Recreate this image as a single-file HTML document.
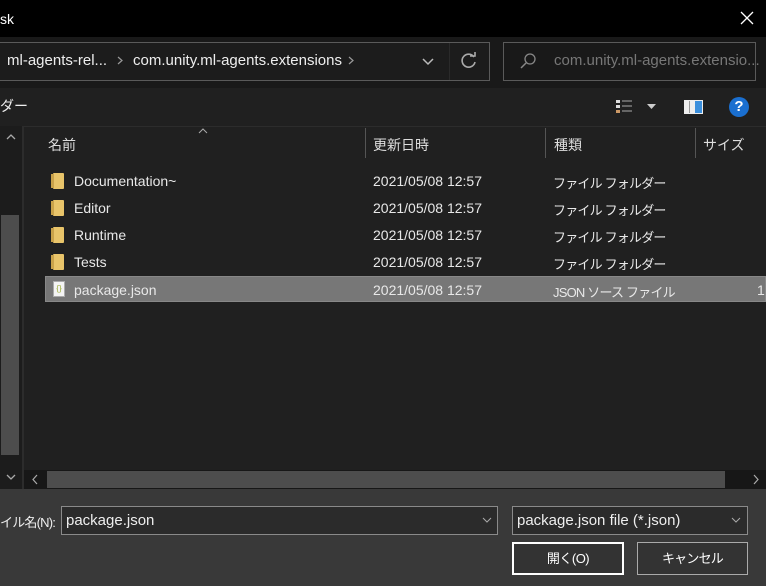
<!DOCTYPE html>
<html><head><meta charset="utf-8"><style>
*{margin:0;padding:0;box-sizing:border-box}
body{width:766px;height:586px;overflow:hidden;background:#202020;font-family:"Liberation Sans","Noto Sans CJK JP",sans-serif;color:#fff;position:relative;font-size:14px}
.a{position:absolute}
.row{position:absolute;left:45px;right:0;height:26px}
.row span{position:absolute;top:5px;font-size:14px;color:#e8e8e8;white-space:nowrap}
.row span.j{font-size:13px;letter-spacing:-0.8px;top:5px}
.fold{position:absolute;left:8px;top:5px;width:11px;height:16px;background:#e8c46a;border-radius:1px}
.fold:before{content:"";position:absolute;left:-2px;top:1px;width:3px;height:14px;background:#c9a24a}
</style></head><body>
<div class="a" style="left:0;top:0;width:766px;height:37px;background:#000"></div>
<div class="a" style="left:0;top:11px;font-size:14px">sk</div>
<svg class="a" style="left:740px;top:11px" width="14" height="14"><path d="M1 1L13 13M13 1L1 13" stroke="#fff" stroke-width="1.3"/></svg>
<div class="a" style="left:0;top:37px;width:766px;height:51px;background:#191919"></div>
<div class="a" style="left:-2px;top:42px;width:492px;height:39px;border:1px solid #5a5a5a;background:#1c1c1c"></div>
<div class="a" style="left:449px;top:43px;width:1px;height:37px;background:#2a2a2a"></div>
<div class="a" style="left:7px;top:52px;font-size:15px;color:#eee">ml-agents-rel...</div>
<svg class="a" style="left:117px;top:56px" width="6" height="9"><path d="M1 1L5 4.5L1 8" stroke="#999" stroke-width="1.2" fill="none"/></svg>
<div class="a" style="left:133px;top:52px;font-size:15px;color:#eee">com.unity.ml-agents.extensions</div>
<svg class="a" style="left:348px;top:56px" width="6" height="9"><path d="M1 1L5 4.5L1 8" stroke="#999" stroke-width="1.2" fill="none"/></svg>
<svg class="a" style="left:422px;top:58px" width="12" height="8"><path d="M1 1L6 6L11 1" stroke="#bbb" stroke-width="1.5" fill="none"/></svg>
<svg class="a" style="left:460px;top:52px" width="18" height="18"><path d="M14 5A6.5 6.5 0 1 0 15 10" stroke="#aaa" stroke-width="1.6" fill="none"/><path d="M10 4L15 4L15 0" stroke="#aaa" stroke-width="1.6" fill="none"/></svg>
<div class="a" style="left:503px;top:42px;width:253px;height:39px;border:1px solid #5a5a5a"></div>
<svg class="a" style="left:519px;top:52px" width="18" height="18"><circle cx="11" cy="7" r="5" stroke="#888" stroke-width="1.3" fill="none"/><path d="M7 11L2 16" stroke="#888" stroke-width="1.5"/></svg>
<div class="a" style="left:554px;top:52px;font-size:15px;color:#777">com.unity.ml-agents.extensio...</div>
<div class="a" style="left:0;top:96px;font-size:14px;color:#eee">ダー</div>
<svg class="a" style="left:615px;top:99px" width="44" height="16"><rect x="1" y="1" width="4" height="3" fill="#ddd"/><rect x="1" y="6" width="4" height="3" fill="#ddd"/><rect x="1" y="11" width="4" height="3" fill="#c96"/><path d="M7 2h10M7 7h10M7 12h10" stroke="#aaa"/><path d="M32 5h9l-4.5 5z" fill="#ccc"/></svg>
<svg class="a" style="left:684px;top:100px" width="19" height="14"><rect x="0" y="0" width="19" height="14" fill="#eee"/><rect x="11" y="1" width="7" height="12" fill="#3b8fdc"/><rect x="5" y="1" width="1" height="12" fill="#999"/></svg>
<div class="a" style="left:729px;top:97px;width:20px;height:20px;border-radius:50%;background:#1a6fd0;font-size:15px;font-weight:bold;text-align:center;line-height:20px">?</div>
<div class="a" style="left:0;top:126px;width:22px;height:364px;background:#1c1c1c"></div>
<div class="a" style="left:22px;top:126px;width:2px;height:364px;background:#2c2c2c"></div>
<div class="a" style="left:1px;top:215px;width:18px;height:240px;background:#4d4d4d"></div>
<svg class="a" style="left:6px;top:133px" width="10" height="7"><path d="M1 6L5 2L9 6" stroke="#aaa" stroke-width="1.3" fill="none"/></svg>
<svg class="a" style="left:6px;top:474px" width="10" height="7"><path d="M1 1L5 5L9 1" stroke="#aaa" stroke-width="1.3" fill="none"/></svg>
<div class="a" style="left:24px;top:126px;width:742px;height:1px;background:#2c2c2c"></div>
<div class="a" style="left:48px;top:135px;font-size:14px;color:#ddd">名前</div>
<svg class="a" style="left:198px;top:128px" width="10" height="6"><path d="M1 5L5 1L9 5" stroke="#aaa" fill="none"/></svg>
<div class="a" style="left:365px;top:128px;width:1px;height:30px;background:#555"></div>
<div class="a" style="left:373px;top:135px;font-size:14px;color:#ddd">更新日時</div>
<div class="a" style="left:545px;top:128px;width:1px;height:30px;background:#555"></div>
<div class="a" style="left:554px;top:135px;font-size:14px;color:#ddd">種類</div>
<div class="a" style="left:695px;top:128px;width:1px;height:30px;background:#555"></div>
<div class="a" style="left:703px;top:135px;font-size:14px;color:#ddd">サイズ</div>

<div class="row" style="top:168px"><div class="fold"></div><span style="left:29px">Documentation~</span><span style="left:328px">2021/05/08 12:57</span><span class="j" style="left:508px">ファイル フォルダー</span></div>
<div class="row" style="top:195px"><div class="fold"></div><span style="left:29px">Editor</span><span style="left:328px">2021/05/08 12:57</span><span class="j" style="left:508px">ファイル フォルダー</span></div>
<div class="row" style="top:222px"><div class="fold"></div><span style="left:29px">Runtime</span><span style="left:328px">2021/05/08 12:57</span><span class="j" style="left:508px">ファイル フォルダー</span></div>
<div class="row" style="top:249px"><div class="fold"></div><span style="left:29px">Tests</span><span style="left:328px">2021/05/08 12:57</span><span class="j" style="left:508px">ファイル フォルダー</span></div>
<div class="row" style="top:276px;background:#777;border:1px solid #888"><div class="a" style="left:7px;top:4px;width:12px;height:16px;background:#f4f4f4;border:1px solid #aaa;font-size:8px;color:#9a3;line-height:14px;text-align:center">{}</div><span style="left:28px;top:5px">package.json</span><span style="left:327px;top:5px">2021/05/08 12:57</span><span class="j" style="left:507px;top:5px">JSON ソース ファイル</span><span style="left:711px;top:5px">1</span></div>

<div class="a" style="left:24px;top:470px;width:742px;height:19px;background:#171717"></div>
<div class="a" style="left:47px;top:471px;width:678px;height:17px;background:#4d4d4d"></div>
<svg class="a" style="left:31px;top:474px" width="7" height="11"><path d="M6 1L2 5.5L6 10" stroke="#aaa" stroke-width="1.2" fill="none"/></svg>
<svg class="a" style="left:753px;top:474px" width="7" height="11"><path d="M1 1L5 5.5L1 10" stroke="#aaa" stroke-width="1.2" fill="none"/></svg>
<div class="a" style="left:0;top:489px;width:766px;height:97px;background:#393939"></div>
<div class="a" style="left:0;top:512px;font-size:13px;letter-spacing:-0.8px;color:#eee">イル名(N):</div>
<div class="a" style="left:61px;top:506px;width:437px;height:29px;border:1px solid #8a8a8a;background:#2b2b2b"></div>
<div class="a" style="left:66px;top:512px;font-size:15px;color:#eee">package.json</div>
<svg class="a" style="left:482px;top:517px" width="10" height="6"><path d="M1 1L5 5L9 1" stroke="#aaa" fill="none"/></svg>
<div class="a" style="left:512px;top:506px;width:236px;height:29px;border:1px solid #8a8a8a;background:#2b2b2b"></div>
<div class="a" style="left:517px;top:512px;font-size:15px;color:#eee">package.json file (*.json)</div>
<svg class="a" style="left:731px;top:517px" width="10" height="6"><path d="M1 1L5 5L9 1" stroke="#aaa" fill="none"/></svg>
<div class="a" style="left:512px;top:542px;width:112px;height:33px;border:2px solid #fff;background:#333;text-align:center;line-height:29px;font-size:13px;letter-spacing:-0.5px">開く(O)</div>
<div class="a" style="left:637px;top:542px;width:111px;height:33px;border:1px solid #aaa;background:#333;text-align:center;line-height:31px;font-size:13px;letter-spacing:-0.8px">キャンセル</div>
</body></html>
